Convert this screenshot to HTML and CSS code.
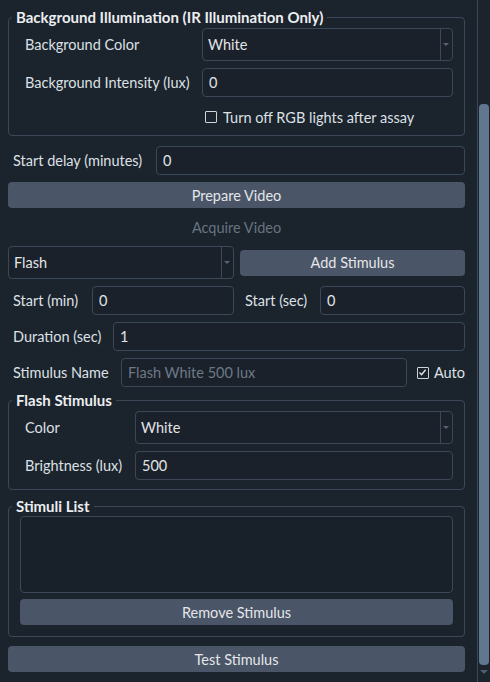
FILE: index.html
```html
<!DOCTYPE html>
<html lang="en">
<head>
  <meta charset="UTF-8">
  <title>Assay Settings</title>
  <link rel="stylesheet" href="styles.css">
</head>
<body>
  <div class="window">
    <div class="panel">

      <fieldset class="group group-bg">
        <legend>Background Illumination (IR Illumination Only)</legend>
        <div class="form form-bg">
          <label>Background Color</label>
          <div class="combo combo-tall"><span>White</span><i class="drop"></i></div>
          <label>Background Intensity (lux)</label>
          <div class="input">0</div>
          <span></span>
          <div class="check-row">
            <span class="check"></span>
            <span>Turn off RGB lights after assay</span>
          </div>
        </div>
      </fieldset>

      <div class="row row-delay">
        <label>Start delay (minutes)</label>
        <div class="input">0</div>
      </div>

      <button class="btn">Prepare Video</button>
      <button class="btn btn-flat" disabled>Acquire Video</button>

      <div class="split split-stim">
        <div class="combo combo-tall"><span>Flash</span><i class="drop"></i></div>
        <button class="btn">Add Stimulus</button>
      </div>

      <div class="split">
        <div class="row row-min">
          <label>Start (min)</label>
          <div class="input">0</div>
        </div>
        <div class="row row-sec">
          <label>Start (sec)</label>
          <div class="input">0</div>
        </div>
      </div>

      <div class="row row-dur">
        <label>Duration (sec)</label>
        <div class="input">1</div>
      </div>

      <div class="row row-name">
        <label>Stimulus Name</label>
        <div class="input placeholder">Flash White 500 lux</div>
        <div class="check-row auto">
          <span class="check checked">
            <svg width="9" height="9" viewBox="0 0 9 9"><path d="M1.5 4.6 L3.6 6.8 L7.6 1.8" fill="none" stroke="#e2e4e7" stroke-width="1.4"/></svg>
          </span>
          <span>Auto</span>
        </div>
      </div>

      <fieldset class="group group-flash">
        <legend>Flash Stimulus</legend>
        <div class="form form-flash">
          <label>Color</label>
          <div class="combo combo-tall"><span>White</span><i class="drop"></i></div>
          <label>Brightness (lux)</label>
          <div class="input">500</div>
        </div>
      </fieldset>

      <fieldset class="group group-list">
        <legend>Stimuli List</legend>
        <div class="list"></div>
        <button class="btn">Remove Stimulus</button>
      </fieldset>

      <button class="btn btn-test">Test Stimulus</button>
    </div>

    <div class="scrollbar">
      <div class="thumb"></div>
      <i class="arrow-down"></i>
    </div>
  </div>
</body>
</html>
```

FILE: styles.css
```css
* {
  margin: 0;
  padding: 0;
  box-sizing: border-box;
}

body {
  background: #1b232d;
  color: #dde0e4;
  font-family: Lato, "Liberation Sans", sans-serif;
  font-size: 14.5px;
  width: 490px;
  height: 682px;
  overflow: hidden;
}

.window {
  display: flex;
  height: 682px;
}

.panel {
  width: 465px;
  padding: 8px 0 0 8px;
  display: flex;
  flex-direction: column;
  gap: 7px;
}

/* group boxes */
.group {
  border: 1px solid #3c4858;
  border-radius: 4px;
  padding: 0 11px 10px 11px;
  min-width: 0;
}

.group legend {
  margin-left: -8px;
  padding: 0 4px;
  font-size: 15px;
  font-weight: 700;
  line-height: 18px;
  color: #eceef0;
}

.group-bg {
  padding-bottom: 5px;
}

.group-flash {
  margin-top: -3px;
  padding-bottom: 9px;
}

.group-list {
  margin-top: 0;
  padding-bottom: 11px;
}

.form {
  display: grid;
  row-gap: 7px;
  align-items: center;
  padding-top: 2px;
}

.form label {
  padding-left: 5px;
}

.form-bg {
  grid-template-columns: 182px 1fr;
}

.form-flash {
  grid-template-columns: 115px 1fr;
}

/* controls */
.input,
.combo {
  border: 1px solid #3c4858;
  border-radius: 4px;
  background: #1a212a;
  height: 29px;
  display: flex;
  align-items: center;
  padding-left: 6px;
  min-width: 0;
  color: #e2e4e7;
}

.placeholder {
  color: #6d7987;
}

.combo {
  height: 33px;
  padding-left: 5px;
  justify-content: space-between;
}

.drop {
  align-self: stretch;
  width: 12px;
  border-left: 1px solid #3c4858;
  position: relative;
}

.drop::after {
  content: "";
  position: absolute;
  left: 2px;
  top: 14px;
  border-left: 3.5px solid transparent;
  border-right: 3.5px solid transparent;
  border-top: 3.5px solid #586474;
}

.btn {
  height: 26px;
  border: none;
  border-radius: 4px;
  background: #4a5567;
  color: #e4e6e9;
  font: inherit;
}

.btn-flat {
  background: none;
  color: #68737f;
  margin-top: -1px;
}

.btn-test {
  margin-top: 2px;
}

/* rows */
.row {
  display: flex;
  align-items: center;
}

.row label {
  padding-left: 5px;
  flex: none;
}

.row .input {
  flex: 1;
}

.row-delay {
  margin-top: 3px;
}

.row-delay label { width: 148px; }
.row-min label { width: 84px; }
.row-sec label { width: 80px; }
.row-dur label { width: 105px; }
.row-name label { width: 113px; }

.split {
  display: grid;
  grid-template-columns: 226px 1fr;
  gap: 6px;
  align-items: center;
}

.split-stim {
  margin-top: -1px;
}

.check-row {
  display: flex;
  align-items: center;
  gap: 6px;
  height: 26px;
  padding-left: 3px;
}

.auto {
  margin-left: 10px;
  padding-left: 0;
  gap: 5px;
}

.check {
  width: 12px;
  height: 12px;
  border: 1px solid #cfd3d8;
  border-radius: 1px;
  display: flex;
  align-items: center;
  justify-content: center;
}

.list {
  height: 77px;
  border: 1px solid #3c4858;
  border-radius: 4px;
  background: #18202a;
  margin: 1px 0 6px;
}

.group-list .btn {
  width: 100%;
}

/* scrollbar */
.scrollbar {
  margin-left: 12px;
  width: 13px;
  border-left: 1px solid #3c4858;
  padding: 104px 1px 0 1px;
  display: flex;
  flex-direction: column;
  align-items: center;
}

.thumb {
  width: 10px;
  height: 561px;
  border-radius: 4px;
  background: #61778d;
}

.arrow-down {
  margin-top: 5px;
  border-left: 4px solid transparent;
  border-right: 4px solid transparent;
  border-top: 4px solid #4d5d6e;
}
```
